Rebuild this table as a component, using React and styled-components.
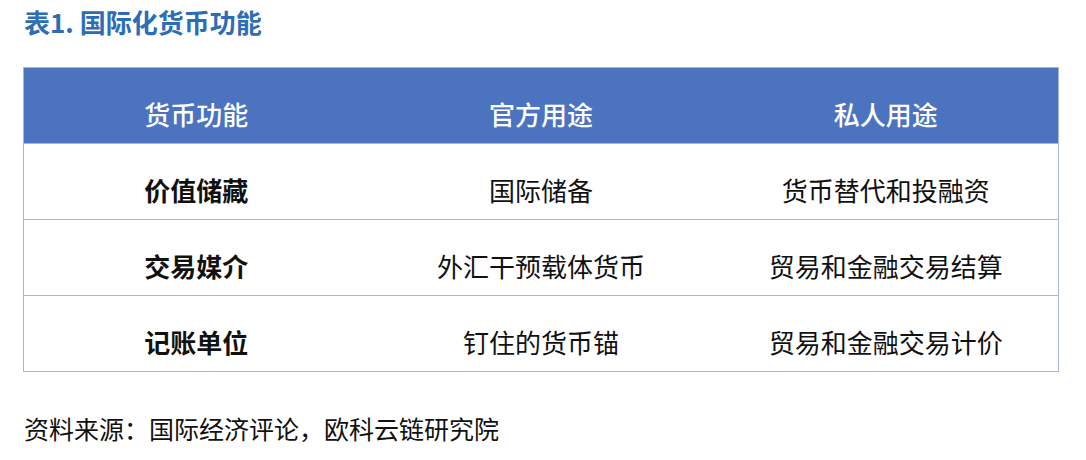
import React from "react";
import styled, { createGlobalStyle } from "styled-components";

const Global = createGlobalStyle`
  html, body { margin: 0; padding: 0; background: #fff; }
  body { font-family: "Noto Sans CJK SC", "Noto Sans", sans-serif; color: #111; }
`;

const Page = styled.div`
  width: 1086px;
  height: 460px;
  box-sizing: border-box;
  padding: 6px 27px 0 23px;
  display: flex;
  flex-direction: column;
`;

const Title = styled.h1`
  margin: 0 0 0 1px;
  font-size: 26px;
  line-height: 32px;
  font-weight: 700;
  color: #2d6db6;
`;

const Table = styled.div`
  margin-top: 29px;
  display: grid;
  grid-template-columns: repeat(3, 1fr);
  border: 1px solid #a9b6da;
  border-top: none;
`;

const Head = styled.div`
  height: 76px;
  box-sizing: border-box;
  padding-top: 16px;
  background: #4b73bf;
  color: #fff;
  font-size: 26px;
  font-weight: 500;
  display: flex;
  align-items: center;
  justify-content: center;
  border-top: 1px solid #a9b6da;
`;

const Cell = styled.div`
  height: 76px;
  box-sizing: border-box;
  padding-top: 16px;
  border-top: 1px solid #a9b6da;
  display: flex;
  align-items: center;
  justify-content: center;
  font-size: 26px;
  font-weight: ${(p) => (p.$bold ? 700 : 400)};
  color: #111;
`;

const Source = styled.p`
  margin: 40px 0 0 1px;
  font-size: 25px;
  line-height: 32px;
  color: #111;
`;

const headers = ["货币功能", "官方用途", "私人用途"];
const rows = [
  ["价值储藏", "国际储备", "货币替代和投融资"],
  ["交易媒介", "外汇干预载体货币", "贸易和金融交易结算"],
  ["记账单位", "钉住的货币锚", "贸易和金融交易计价"],
];

export default function App() {
  return (
    <>
      <Global />
      <Page>
        <Title>表1. 国际化货币功能</Title>
        <Table>
          {headers.map((h) => (
            <Head key={h}>{h}</Head>
          ))}
          {rows.map((r) =>
            r.map((c, i) => (
              <Cell key={c + i} $bold={i === 0}>
                {c}
              </Cell>
            ))
          )}
        </Table>
        <Source>资料来源：国际经济评论，欧科云链研究院</Source>
      </Page>
    </>
  );
}
